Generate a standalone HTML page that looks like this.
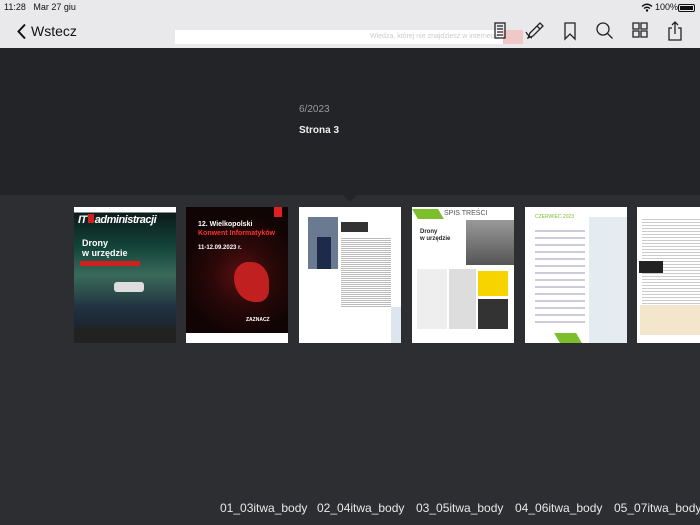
<!DOCTYPE html>
<html><head><meta charset="utf-8"><style>
*{margin:0;padding:0;box-sizing:border-box}
body{width:700px;height:525px;overflow:hidden;background:#2c2e32;font-family:"Liberation Sans",sans-serif;position:relative}
.top{position:absolute;left:0;top:0;width:700px;height:48px;background:#e9e9eb}
.dark{position:absolute;left:0;top:48px;width:700px;height:147px;background:#232428}
.tri{position:absolute;left:343px;top:195px;width:0;height:0;border-left:7px solid transparent;border-right:7px solid transparent;border-top:7px solid #232428}
.t{position:absolute;white-space:nowrap}
.pg{position:absolute;top:207px;width:102px;height:136px;background:#fff;overflow:hidden}
.b{position:absolute}
.lbl{position:absolute;top:501px;color:#e8e8e8;font-size:12px}
</style></head><body>
<div class="top"></div>
<div class="t" style="left:4px;top:2px;font-size:9px;color:#111">11:28&nbsp;&nbsp; Mar 27 giu</div>
<div class="t" style="left:655px;top:2px;font-size:9px;color:#111">100%</div>
<svg class="b" style="left:641px;top:3px" width="12" height="9" viewBox="0 0 12 9"><path d="M1 3.5Q6-1 11 3.5M3 5.5Q6 3 9 5.5" stroke="#111" stroke-width="1.4" fill="none"/><circle cx="6" cy="7.5" r="1.2" fill="#111"/></svg>
<div class="b" style="left:678px;top:4px;width:17px;height:8px;border:1px solid #111;border-radius:2px;padding:1px"><div style="width:100%;height:100%;background:#111"></div></div>
<div class="b" style="left:175px;top:30px;width:330px;height:14px;background:#fff"></div>
<div class="t" style="left:370px;top:33px;font-size:7px;color:#ccc">Wiedza, której nie znajdziesz w internecie</div>
<div class="b" style="left:503px;top:30px;width:20px;height:14px;background:#f0c8c8"></div>
<svg class="b" style="left:16px;top:23px" width="12" height="17" viewBox="0 0 12 17"><path d="M9 1.5L2.5 8.5L9 15.5" stroke="#111" stroke-width="2" fill="none"/></svg>
<div class="t" style="left:31px;top:23px;font-size:14px;color:#111">Wstecz</div>
<svg class="b" style="left:490px;top:20px" width="200" height="22" viewBox="0 0 200 22" fill="none" stroke="#222" stroke-width="1.3">
<rect x="5" y="3" width="10" height="15"/><path d="M7 6h6M7 9h6M7 12h6M7 15h6"/>
<path d="M38 18l2-5 10-10 3 3-10 10zM47 6l3 3M36 12q2 4 6 6"/>
<path d="M75 3h10v16l-5-5-5 5z"/>
<circle cx="113" cy="9" r="6"/><path d="M117.5 13.5l5 5"/>
<path d="M143 3h6v6h-6zM151 3h6v6h-6zM143 11h6v6h-6zM151 11h6v6h-6z"/>
<path d="M182 8h-3v12h12v-12h-3M185 14v-12M182 5l3-3 3 3"/>
</svg>
<div class="dark"></div>
<div class="tri"></div>
<div class="t" style="left:299px;top:104px;font-size:10px;color:#9a9a9c">6/2023</div>
<div class="t" style="left:299px;top:125px;font-size:10px;color:#f0f0f0;font-weight:bold">Strona 3</div>

<div class="pg" style="left:74px;background:linear-gradient(180deg,#fff 0,#fff 4%,#0c1a1a 4%,#13453a 30%,#3a6a5a 50%,#203040 75%,#1a1a20 100%)">
<div class="t" style="left:4px;top:7px;font-size:11px;font-weight:bold;color:#fff;font-style:italic;letter-spacing:-0.5px">IT<span style="display:inline-block;width:6px;height:9px;background:#d02020;margin:0 1px"></span>administracji</div>
<div class="t" style="left:8px;top:31px;font-size:9px;font-weight:bold;color:#fff;line-height:10px">Drony<br>w urzędzie</div>
<div class="b" style="left:6px;top:54px;width:60px;height:5px;background:#d02020"></div>
<div class="b" style="left:40px;top:75px;width:30px;height:10px;background:#ddd;border-radius:3px"></div>
<div class="b" style="left:0;top:120px;width:102px;height:16px;background:#222"></div>
</div>
<div class="pg" style="left:186px;background:radial-gradient(circle at 55% 50%,#5a1010 0,#2a0808 35%,#100404 70%);">
<div class="b" style="left:88px;top:0;width:8px;height:10px;background:#e02020"></div>
<div class="t" style="left:12px;top:14px;font-size:7px;color:#fff;font-weight:bold">12. Wielkopolski</div>
<div class="t" style="left:12px;top:23px;font-size:7px;color:#ff3030;font-weight:bold">Konwent Informatyków</div>
<div class="t" style="left:12px;top:38px;font-size:6px;color:#fff;font-weight:bold">11-12.09.2023 r.</div>
<div class="b" style="left:48px;top:55px;width:35px;height:40px;background:#c02020;border-radius:40% 50% 30% 60%"></div>
<div class="t" style="left:60px;top:110px;font-size:5px;color:#fff;font-weight:bold">ZAZNACZ</div>
<div class="b" style="left:0;top:126px;width:102px;height:10px;background:#fff"></div>
</div>
<div class="pg" style="left:299px">
<div class="b" style="left:9px;top:10px;width:30px;height:52px;background:#6a7a90"></div>
<div class="b" style="left:18px;top:30px;width:14px;height:32px;background:#1e2a4a"></div>
<div class="b" style="left:42px;top:15px;width:27px;height:10px;background:#333"></div>
<div class="b" style="left:42px;top:30px;width:50px;height:70px;background:repeating-linear-gradient(#fff 0,#fff 1px,#bbb 1px,#bbb 2px)"></div>
<div class="b" style="left:92px;top:100px;width:10px;height:36px;background:#dde6ee"></div>
</div>
<div class="pg" style="left:412px">
<div class="b" style="left:3px;top:2px;width:26px;height:10px;background:#7cbf2a;transform:skewX(30deg)"></div>
<div class="t" style="left:32px;top:3px;font-size:7px;color:#555">SPIS TREŚCI</div>
<div class="b" style="left:54px;top:13px;width:48px;height:45px;background:linear-gradient(#999,#555)"></div>
<div class="t" style="left:8px;top:22px;font-size:6px;font-weight:bold;color:#222;line-height:7px">Drony<br>w urzędzie</div>
<div class="b" style="left:5px;top:62px;width:30px;height:60px;background:#eee"></div>
<div class="b" style="left:37px;top:62px;width:27px;height:60px;background:#ddd"></div>
<div class="b" style="left:66px;top:64px;width:30px;height:25px;background:#f7d400"></div>
<div class="b" style="left:66px;top:92px;width:30px;height:30px;background:#333"></div>
</div>
<div class="pg" style="left:525px">
<div class="t" style="left:10px;top:7px;font-size:5px;color:#7cbf2a">CZERWIEC 2023</div>
<div class="b" style="left:64px;top:10px;width:38px;height:126px;background:#e4ecf2"></div>
<div class="b" style="left:10px;top:18px;width:50px;height:100px;background:repeating-linear-gradient(#fff 0,#fff 5px,#ccd 5px,#ccd 7px)"></div>
<div class="b" style="left:32px;top:126px;width:22px;height:10px;background:#7cbf2a;transform:skewX(30deg)"></div>
</div>
<div class="pg" style="left:637px;width:63px">
<div class="b" style="left:5px;top:10px;width:58px;height:90px;background:repeating-linear-gradient(#fff 0,#fff 2px,#ccc 2px,#ccc 3px)"></div>
<div class="b" style="left:2px;top:54px;width:24px;height:12px;background:#222"></div>
<div class="b" style="left:3px;top:98px;width:60px;height:30px;background:#f3e6cc"></div>
</div>

<div class="lbl" style="left:220px">01_03itwa_body</div>
<div class="lbl" style="left:317px">02_04itwa_body</div>
<div class="lbl" style="left:416px">03_05itwa_body</div>
<div class="lbl" style="left:515px">04_06itwa_body</div>
<div class="lbl" style="left:614px">05_07itwa_body</div>
</body></html>
